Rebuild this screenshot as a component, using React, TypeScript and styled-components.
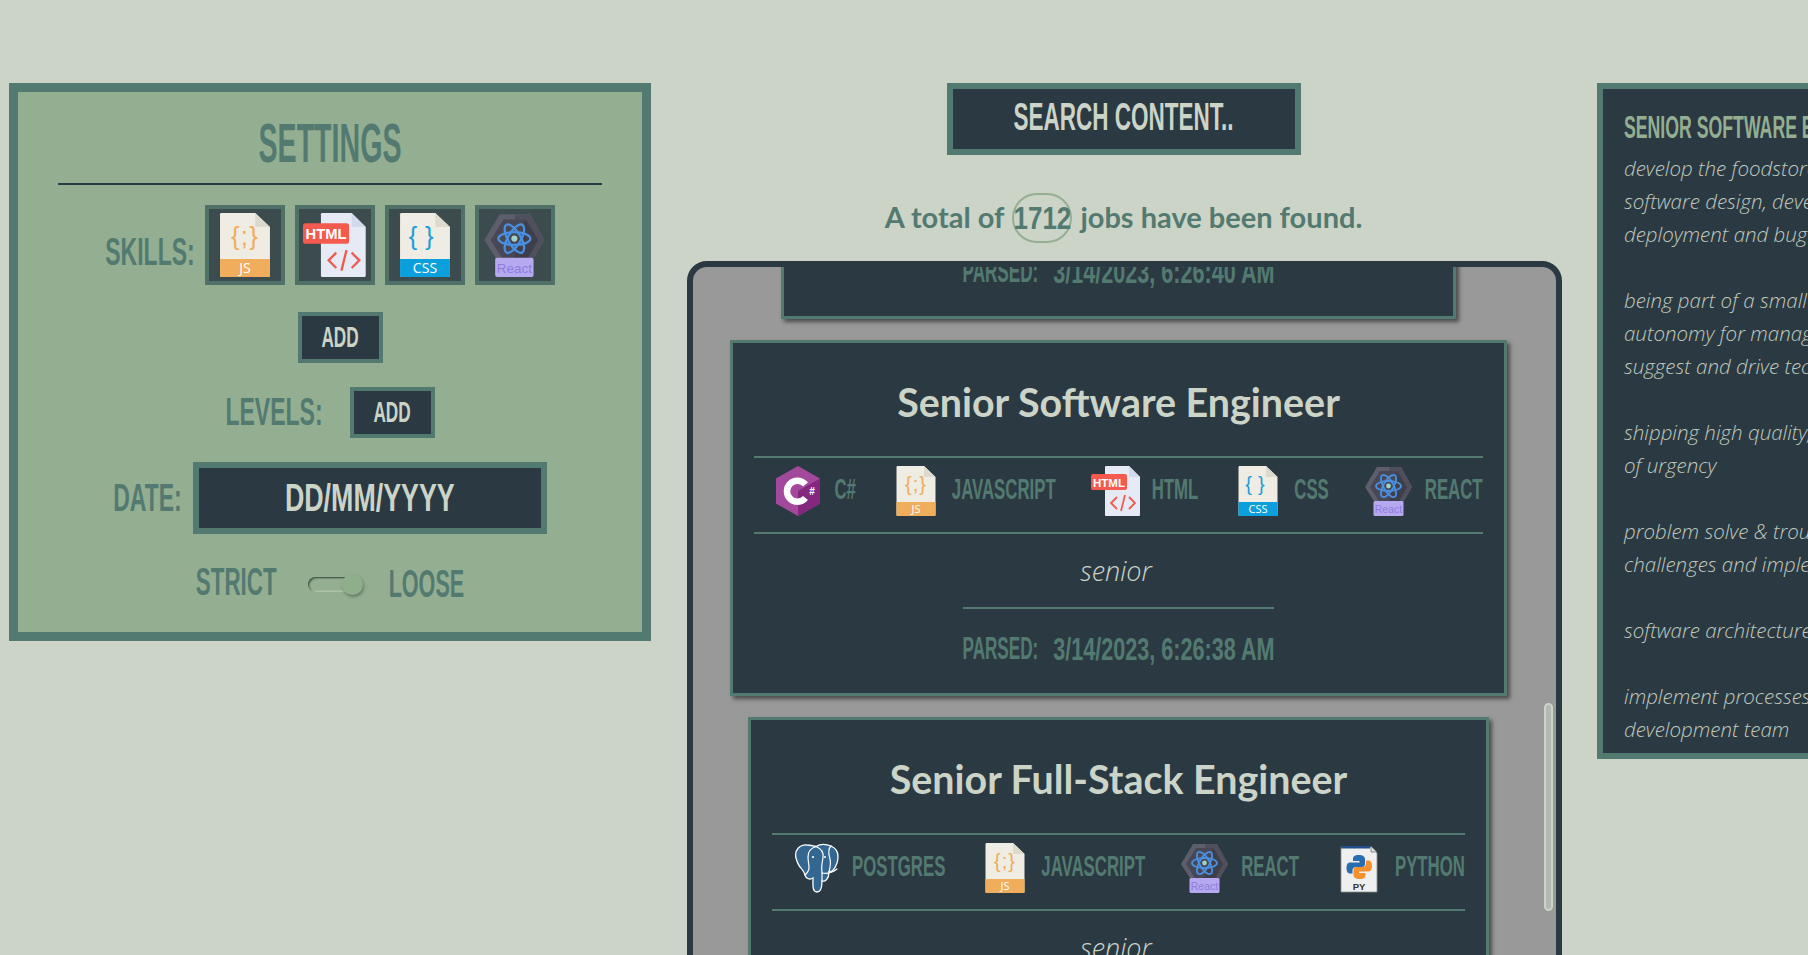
import React from 'react';
import styled, { createGlobalStyle, css } from 'styled-components';

const colors = {
    page: '#ccd4c8',
    sage: '#94ae91',
    teal: '#537a71',
    dark: '#2b3a42',
    grey: '#999999',
};

const GlobalStyle = createGlobalStyle`
    html, body {
        margin: 0;
        height: 100%;
        overflow: hidden;
        background: ${colors.page};
    }
`;

// no Bebas Neue here: narrow caps, squeezed up to the same tall proportions
const tall = (size: number, stretch: number, weight = 700) => css`
    display: inline-block;
    font-family: 'Liberation Sans Narrow', 'Liberation Sans', sans-serif;
    font-size: ${size}px;
    font-weight: ${weight};
    line-height: 1;
    white-space: nowrap;
    transform: scaleY(${stretch});
`;

const Page = styled.div`
    display: flex;
    align-items: flex-start;
    gap: 36px;
    width: max-content;
    height: 100vh;
    box-sizing: border-box;
    padding: 83px 0 0 9px;
    overflow: hidden;
`;

/* settings */

const Settings = styled.section`
    width: 642px;
    height: 558px;
    box-sizing: border-box;
    background: ${colors.sage};
    border: 9px solid ${colors.teal};
    display: flex;
    flex-direction: column;
    align-items: center;
`;

const SettingsHeader = styled.div`
    width: 544px;
    height: 93px;
    box-sizing: border-box;
    padding-top: 12px;
    margin-bottom: 20px;
    border-bottom: 2px solid ${colors.dark};
    display: flex;
    align-items: center;
    justify-content: center;
`;

const SettingsTitle = styled.h2`
    ${tall(28.6, 1.95)}
    margin: 0;
    color: ${colors.teal};
`;

const FieldRow = styled.div<{ $gap: number; $after: number }>`
    display: flex;
    align-items: center;
    justify-content: center;
    gap: ${(p) => p.$gap}px;
    margin-bottom: ${(p) => p.$after}px;
`;

const FieldLabel = styled.span`
    ${tall(23, 1.7)}
    color: ${colors.teal};
`;

const SkillsLabel = styled(FieldLabel)`
    margin-top: 14px;
`;

const SkillBox = styled.div`
    width: 80px;
    height: 80px;
    box-sizing: border-box;
    background: #3b4b4e;
    border: 4px solid #4f7167;
    display: flex;
    align-items: center;
    justify-content: center;

    svg {
        width: 64px;
        height: 64px;
    }
`;

const AddButton = styled.button<{ $shift?: number; $after?: number }>`
    width: 85px;
    height: 51px;
    box-sizing: border-box;
    background: ${colors.dark};
    border: 4px solid ${colors.teal};
    padding: 0;
    margin-left: ${(p) => p.$shift ?? 0}px;
    margin-bottom: ${(p) => p.$after ?? 0}px;
    color: ${colors.page};
`;

const AddText = styled.span`
    ${tall(17.2, 1.7)}
`;

const DateBox = styled.div`
    width: 354px;
    height: 72px;
    box-sizing: border-box;
    background: ${colors.dark};
    border: 6px solid ${colors.teal};
    display: flex;
    align-items: center;
    justify-content: center;
    color: ${colors.page};
`;

const DateText = styled.span`
    ${tall(26.8, 1.46)}
`;

const ToggleRow = styled.div`
    display: flex;
    align-items: center;
    height: 40px;
`;

const StrictLabel = styled.span`
    ${tall(22.4, 1.72)}
    margin-bottom: 2px;
    color: ${colors.teal};
`;

const LooseLabel = styled.span`
    ${tall(21.6, 1.8)}
    color: ${colors.teal};
`;

const Switch = styled.div`
    position: relative;
    width: 55px;
    height: 15px;
    margin: 0 26px 0 31px;
    border-radius: 8px;
    background: ${colors.sage};
    box-shadow: inset 1px 1px 2px rgba(30, 50, 40, 0.85),
        inset -1px -1px 2px rgba(220, 235, 215, 0.6);
`;

const SwitchThumb = styled.div`
    position: absolute;
    right: 0;
    top: -3px;
    width: 21px;
    height: 21px;
    border-radius: 50%;
    background: #8fae8b;
    box-shadow: 1px 2px 3px rgba(40, 60, 50, 0.45);
`;

/* center column */

const Center = styled.main`
    width: 875px;
    display: flex;
    flex-direction: column;
    align-items: center;
    margin-right: -1px;
`;

const SearchBox = styled.div`
    width: 354px;
    height: 72px;
    margin-right: 2px;
    box-sizing: border-box;
    background: ${colors.dark};
    border: 6px solid ${colors.teal};
    display: flex;
    align-items: center;
    justify-content: center;
    color: ${colors.page};
`;

const SearchText = styled.span`
    ${tall(22.5, 1.74)}
    margin-bottom: 1px;
`;

const Total = styled.p`
    height: 46px;
    margin: 38px 2px 22px 0;
    display: flex;
    align-items: center;
    gap: 8px;
    font-family: Lato, 'Liberation Sans', sans-serif;
    font-size: 29px;
    font-weight: 700;
    color: ${colors.teal};
`;

const TotalCount = styled.span`
    align-self: flex-start;
    width: 60px;
    height: 50px;
    box-sizing: border-box;
    border: 2px solid ${colors.sage};
    border-radius: 25px;
    display: flex;
    align-items: center;
    justify-content: center;
`;

const TotalNumber = styled.span`
    ${tall(26, 1.2)}
`;

const List = styled.div`
    position: relative;
    width: 100%;
    height: 800px;
    box-sizing: border-box;
    background: ${colors.grey};
    border: 6px solid ${colors.dark};
    border-radius: 20px;
    overflow: hidden;
`;

const ListScroll = styled.div<{ $offset: number }>`
    display: flex;
    flex-direction: column;
    align-items: center;
    gap: 21px;
    padding-right: 12px;
    margin-top: -${(p) => p.$offset}px;
`;

const ScrollThumb = styled.div`
    position: absolute;
    right: 3px;
    top: 436px;
    width: 9px;
    height: 208px;
    box-sizing: border-box;
    border: 2px solid ${colors.page};
    border-radius: 5px;
    background: #b5b9b3;
`;

const Card = styled.article<{ $minWidth?: number }>`
    box-sizing: border-box;
    min-width: ${(p) => p.$minWidth ?? 0}px;
    flex-shrink: 0;
    padding: 0 21px 6px;
    background: ${colors.dark};
    border: 3px solid ${colors.teal};
    box-shadow: 3px 3px 4px rgba(0, 0, 0, 0.5);
    display: flex;
    flex-direction: column;
    align-items: center;
`;

const CardTitle = styled.h3`
    height: 113px;
    box-sizing: border-box;
    padding-top: 3px;
    margin: 0;
    display: flex;
    align-items: center;
    font-family: Lato, 'Liberation Sans', sans-serif;
    font-size: 39.4px;
    font-weight: 700;
    white-space: nowrap;
    color: ${colors.page};
`;

const TagRow = styled.div`
    align-self: stretch;
    display: flex;
    gap: 35px;
    box-sizing: border-box;
    height: 78px;
    padding: 8px 0 0 19px;
    border-top: 2px solid ${colors.teal};
    border-bottom: 2px solid ${colors.teal};
`;

const Tag = styled.div`
    display: flex;
    gap: 11px;
    align-items: center;
    height: 50px;

    svg {
        width: 50px;
        height: 50px;
        flex-shrink: 0;
    }
`;

const TagName = styled.span`
    ${tall(16.8, 1.79)}
    margin-bottom: 2px;
    color: ${colors.teal};
`;

const Level = styled.div`
    height: 73px;
    margin-right: 5px;
    display: flex;
    align-items: center;
    font-family: 'Open Sans', sans-serif;
    font-size: 27px;
    font-weight: 300;
    font-style: italic;
    color: ${colors.page};
`;

const Parsed = styled.div`
    height: 75px;
    padding-top: 3px;
    display: flex;
    align-items: center;
    gap: 15px;
    border-top: 2px solid ${colors.teal};
    color: ${colors.teal};
`;

const ParsedLabel = styled.span`
    ${tall(17.1, 1.78)}
`;

const ParsedDate = styled.span`
    ${tall(21.6, 1.41)}
`;

/* details panel */

const Details = styled.aside`
    width: 700px;
    height: 676px;
    box-sizing: border-box;
    padding: 31px 21px;
    background: ${colors.dark};
    border: 6px solid ${colors.teal};
`;

const DetailsTitle = styled.h4`
    ${tall(17.7, 1.73)}
    margin: 0 0 14px;
    color: ${colors.sage};
`;

const DetailsBody = styled.div`
    font-family: 'Open Sans', sans-serif;
    font-size: 20.5px;
    font-weight: 300;
    font-style: italic;
    line-height: 33px;
    color: #c0c9bf;
`;

const DetailsLine = styled.div`
    min-height: 33px;
    white-space: nowrap;
`;

/* icons */

const iconLabel = 'Liberation Sans, sans-serif';

const FileIcon = ({ band, accent, label, spacing, children }: { band: string; accent: string; label: string; spacing: number; children?: React.ReactNode }) => (
    <svg viewBox="0 0 50 50">
        <path d="M6 0H33L44.5 11V49a1 1 0 0 1-1 1H6.5a1 1 0 0 1-1-1V1Z" fill="#efece4" />
        <path d="M33 0L44.5 11H33Z" fill="#dcd9cd" />
        <path d="M5.5 36H44.5V49a1 1 0 0 1-1 1H6.5a1 1 0 0 1-1-1Z" fill={band} />
        <text x="25" y="47" textAnchor="middle" fontFamily="Open Sans, sans-serif" fontSize="11" fill="#fff">{label}</text>
        <text x="25" y="25" textAnchor="middle" fontFamily={iconLabel} fontSize="20" letterSpacing={spacing} fill={accent}>{children}</text>
    </svg>
);

const JsIcon = () => <FileIcon band="#f0ad5b" accent="#f0ad5b" label="JS" spacing={1}>{'{;}'}</FileIcon>;
const CssIcon = () => <FileIcon band="#0b9fdc" accent="#1a9fdc" label="CSS" spacing={6}>{'{}'}</FileIcon>;

const HtmlIcon = () => (
    <svg viewBox="0 0 50 50">
        <path d="M15 0H38L49 11V49a1 1 0 0 1-1 1H15a1 1 0 0 1-1-1V1a1 1 0 0 1 1-1Z" fill="#e6eaf5" />
        <path d="M38 0L49 11H38Z" fill="#d3d9ec" />
        <rect x="0" y="8" width="36" height="16" rx="2" fill="#f55a4e" />
        <text x="18" y="20.5" textAnchor="middle" fontFamily={iconLabel} fontSize="11.5" fontWeight="700" fill="#fff">HTML</text>
        <path d="M26 31L20 37L26 43M38 31L44 37L38 43M34 29L30 45" fill="none" stroke="#f05a4f" strokeWidth="1.8" />
    </svg>
);

const ReactIcon = () => (
    <svg viewBox="0 0 50 50">
        <path d="M1 21L13 1H37L48 21L37 40H13Z" fill="#5d5d6b" />
        <path d="M25 1H37L48 21L37 40H25Z" fill="#50505d" />
        <path d="M6 21L16 5H34L43 21L34 37H16Z" fill="#474755" />
        <path d="M33 5L43 21L34 37H24Z" fill="#3f3f4b" />
        <g fill="none" stroke="#4a90e2" strokeWidth="1.8">
            <ellipse cx="24.5" cy="20" rx="12.5" ry="5" />
            <ellipse cx="24.5" cy="20" rx="12.5" ry="5" transform="rotate(60 24.5 20)" />
            <ellipse cx="24.5" cy="20" rx="12.5" ry="5" transform="rotate(120 24.5 20)" />
        </g>
        <circle cx="24.5" cy="20" r="2.4" fill="#9fd0c0" />
        <rect x="9.5" y="35" width="30" height="15" rx="1.5" fill="#b7a9ef" />
        <text x="24.5" y="46.5" textAnchor="middle" fontFamily={iconLabel} fontSize="10.5" fill="#8d7de0">React</text>
    </svg>
);

const CSharpIcon = () => (
    <svg viewBox="0 0 50 50">
        <path d="M25 0L47 12.5V37.5L25 50L3 37.5V12.5Z" fill="#a3499c" />
        <path d="M25 25L47 12.5V37.5L25 50Z" fill="#86277f" />
        <path d="M32.5 18.5A10.5 10.5 0 1 0 32.5 32" fill="none" stroke="#fff" strokeWidth="6.5" />
        <text x="39" y="29" textAnchor="middle" fontFamily={iconLabel} fontSize="10" fontWeight="700" fill="#fff">#</text>
    </svg>
);

const PostgresIcon = () => (
    <svg viewBox="0 0 50 50">
        <path d="M5 15C3 7 9 1.500 16 2C20 2 22 3 25 3.500C29 1 35 1 40 3C47 6 48 13 46 20C44 26 41 29 38 29C38 36 34 39 31 38C31 43 30 49 26 49C21 49 22 42 22 35C19 37 15 36 14 32C13 28 12 28 10 25C7 22 6 19 5 15Z" fill="#336791" stroke="#fff" strokeWidth="1.3" />
        <g fill="none" stroke="#fff" strokeWidth="1.2" strokeLinecap="round">
            <path d="M25 3.500C20 5 17 9 17 14C17 18 18 21 18 25C18 28 16 30 14 32" />
            <path d="M25 3.500C31 6 33 10 32 15C31 20 30 24 31 29L31 38" />
            <path d="M40 3C36 7 38 12 39 16C40 20 39 25 38 29" />
            <path d="M31 30C36 31 41 30 46 26" />
        </g>
        <circle cx="22" cy="14" r="1.1" fill="#fff" />
        <circle cx="34" cy="14" r="1" fill="#fff" />
    </svg>
);

const PythonIcon = () => (
    <svg viewBox="0 0 50 50">
        <path d="M7 4H37L43 10V49H7Z" fill="#efefef" stroke="#8a8f8f" strokeWidth="0.8" />
        <path d="M7 3H36V5.500H7Z" fill="#1f4f8f" />
        <path d="M37 3L43 9H37Z" fill="#d9d9d9" stroke="#555" strokeWidth="0.6" />
        <path d="M25 12C20 12 19 14 19 16V18H25.500V19.500H16C13.500 19.500 12.500 22 12.500 25C12.500 28 13.500 30.500 16 30.500H18.500V27.500C18.500 25.500 20 24 22 24H28C30 24 31 22.500 31 21V16C31 13.500 28.500 12 25 12Z" fill="#2a6cb0" />
        <path d="M25.500 36C30.500 36 31.500 34 31.500 32V30H25V28.500H34.500C37 28.500 38 26 38 23C38 20 37 17.500 34.500 17.500H32V20.500C32 22.500 30.500 24 28.500 24H22.500C20.500 24 19.500 25.500 19.500 27V32C19.500 34.500 22 36 25.500 36Z" fill="#f5902e" />
        <text x="25" y="46.5" textAnchor="middle" fontFamily={iconLabel} fontSize="9.5" fontWeight="700" fill="#333">PY</text>
    </svg>
);

const icons: Record<string, React.ReactNode> = {
    'C#': <CSharpIcon />,
    JAVASCRIPT: <JsIcon />,
    HTML: <HtmlIcon />,
    CSS: <CssIcon />,
    REACT: <ReactIcon />,
    POSTGRES: <PostgresIcon />,
    PYTHON: <PythonIcon />,
};

const jobs = [
    { title: 'Senior Software Engineer', tags: ['JAVASCRIPT', 'HTML', 'CSS', 'REACT'], parsed: '3/14/2023, 6:26:40 AM', minWidth: 675 },
    { title: 'Senior Software Engineer', tags: ['C#', 'JAVASCRIPT', 'HTML', 'CSS', 'REACT'], parsed: '3/14/2023, 6:26:38 AM' },
    { title: 'Senior Full-Stack Engineer', tags: ['POSTGRES', 'JAVASCRIPT', 'REACT', 'PYTHON'], parsed: '3/14/2023, 6:26:36 AM' },
];

const description = [
    'develop the foodstore platform through',
    'software design, development, testing,',
    'deployment and bug fixing',
    '',
    'being part of a small team with plenty of',
    'autonomy for managing your own work,',
    'suggest and drive technical improvements',
    '',
    'shipping high quality, tested code with a sense',
    'of urgency',
    '',
    'problem solve & troubleshoot technical',
    'challenges and implement solutions',
    '',
    'software architecture and system design',
    '',
    'implement processes that help the wider',
    'development team',
];

const App = () => {
    return (
        <>
            <GlobalStyle />
            <Page>
                <Settings>
                    <SettingsHeader>
                        <SettingsTitle>SETTINGS</SettingsTitle>
                    </SettingsHeader>
                    <FieldRow $gap={10} $after={27}>
                        <SkillsLabel>SKILLS:</SkillsLabel>
                        <SkillBox><JsIcon /></SkillBox>
                        <SkillBox><HtmlIcon /></SkillBox>
                        <SkillBox><CssIcon /></SkillBox>
                        <SkillBox><ReactIcon /></SkillBox>
                    </FieldRow>
                    <AddButton $shift={20} $after={24}><AddText>ADD</AddText></AddButton>
                    <FieldRow $gap={27} $after={24}>
                        <FieldLabel>LEVELS:</FieldLabel>
                        <AddButton><AddText>ADD</AddText></AddButton>
                    </FieldRow>
                    <FieldRow $gap={11} $after={30}>
                        <FieldLabel>DATE:</FieldLabel>
                        <DateBox><DateText>DD/MM/YYYY</DateText></DateBox>
                    </FieldRow>
                    <ToggleRow>
                        <StrictLabel>STRICT</StrictLabel>
                        <Switch><SwitchThumb /></Switch>
                        <LooseLabel>LOOSE</LooseLabel>
                    </ToggleRow>
                </Settings>
                <Center>
                    <SearchBox><SearchText>SEARCH CONTENT..</SearchText></SearchBox>
                    <Total>
                        A total of <TotalCount><TotalNumber>1712</TotalNumber></TotalCount> jobs have been found.
                    </Total>
                    <List>
                        <ListScroll $offset={304}>
                            {jobs.map((job) => (
                                <Card key={job.parsed} $minWidth={job.minWidth}>
                                    <CardTitle>{job.title}</CardTitle>
                                    <TagRow>
                                        {job.tags.map((tag) => (
                                            <Tag key={tag}>
                                                {icons[tag]}
                                                <TagName>{tag}</TagName>
                                            </Tag>
                                        ))}
                                    </TagRow>
                                    <Level>senior</Level>
                                    <Parsed>
                                        <ParsedLabel>PARSED:</ParsedLabel>
                                        <ParsedDate>{job.parsed}</ParsedDate>
                                    </Parsed>
                                </Card>
                            ))}
                        </ListScroll>
                        <ScrollThumb />
                    </List>
                </Center>
                <Details>
                    <DetailsTitle>SENIOR SOFTWARE ENGINEER</DetailsTitle>
                    <DetailsBody>
                        {description.map((line, i) => (
                            <DetailsLine key={i}>{line}</DetailsLine>
                        ))}
                    </DetailsBody>
                </Details>
            </Page>
        </>
    );
};

export default App;
